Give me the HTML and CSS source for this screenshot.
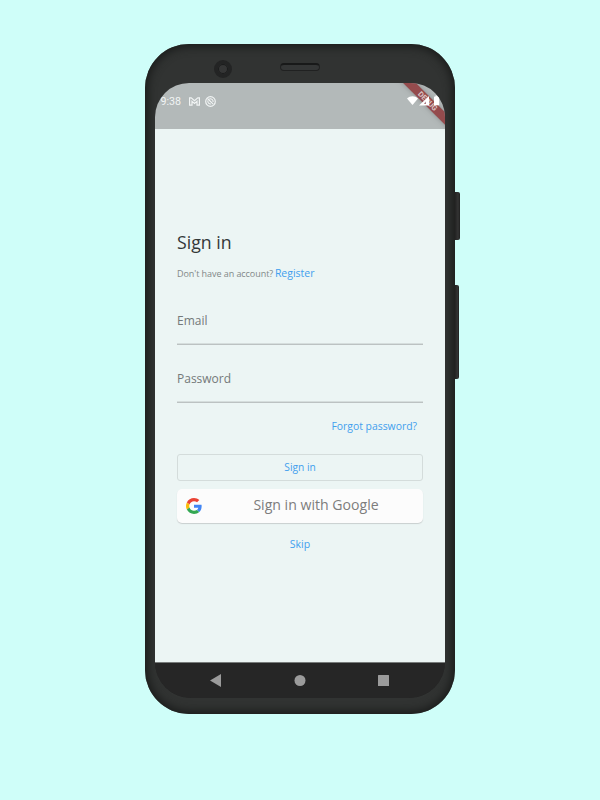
FILE: index.html
```
<!DOCTYPE html>
<html lang="en">
<head>
<meta charset="utf-8">
<title>Sign in</title>
<link rel="stylesheet" href="styles.css">
</head>
<body>
<main class="phone">
  <span class="side-key power"></span>
  <span class="side-key volume"></span>
  <span class="camera"></span>
  <span class="speaker"></span>
  <div class="screen">
    <header class="status">
      <span class="time">9:38</span>
      <svg class="mail" width="11" height="9" viewBox="0 0 11 9" fill="none" stroke="#f1f4f4" stroke-width="1.2"><path d="M.6 8.2V.8h1.6l3.3 2.8L8.8.8h1.6v7.4H8V4.300L5.500 6.400 3 4.300v3.900z"/></svg>
      <svg class="sync" width="11" height="11" viewBox="0 0 11 11" fill="none" stroke="#f1f4f4"><circle cx="5.5" cy="5.5" r="4.800" stroke-width="1.2"/><path d="M2.500 2.500l5.700 5.700M4.300 3c2-.8 4.200.8 3.800 3M2.900 4.500c-.5 2 1.200 3.900 3.200 3.500" stroke-width="1.100"/></svg>
      <svg class="signals" width="35" height="12" viewBox="0 0 35 12" fill="#fff"><path d="M0 3.600C3.300.6 7.800.6 11 3.600L5.500 10z"/><path fill-rule="evenodd" d="M12 10.500L22 1v9.500zM17 8.700h2V6.200z"/><path d="M27 10.300V2.200q0-.7.700-.7h.8V.6h2.200v.9h.8q.7 0 .7.700v8.100z"/></svg>
      <span class="debug">DEBUG</span>
    </header>
    <section class="content">
      <h1>Sign in</h1>
      <p class="account">Don't have an account? <a>Register</a></p>
      <div class="field">Email</div>
      <div class="field password">Password</div>
      <a class="forgot">Forgot password?</a>
      <div class="button">Sign in</div>
      <div class="google">
        <svg width="16" height="16" viewBox="0 0 48 48"><path fill="#ea4335" d="M24 9.500c3.540 0 6.710 1.220 9.210 3.600l6.850-6.850C35.900 2.380 30.470 0 24 0 14.620 0 6.510 5.380 2.560 13.220l7.980 6.190C12.430 13.720 17.740 9.500 24 9.500z"/><path fill="#4285f4" d="M46.980 24.550c0-1.570-.15-3.090-.38-4.550H24v9.020h12.940c-.58 2.960-2.260 5.480-4.780 7.180l7.730 6c4.510-4.180 7.090-10.360 7.090-17.650z"/><path fill="#fbbc05" d="M10.530 28.590c-.48-1.450-.76-2.990-.76-4.590s.27-3.140.76-4.590l-7.980-6.190C.92 16.460 0 20.120 0 24s.92 7.540 2.560 10.780z"/><path fill="#34a853" d="M24 48c6.480 0 11.930-2.130 15.890-5.810l-7.730-6c-2.150 1.450-4.920 2.300-8.160 2.300-6.260 0-11.570-4.220-13.470-9.910l-7.980 6.190C6.510 42.620 14.620 48 24 48z"/></svg>
        <span>Sign in with Google</span>
      </div>
      <a class="skip">Skip</a>
    </section>
    <nav class="nav">
      <svg width="290" height="35" viewBox="0 0 290 35" fill="#9b9b9b"><path d="M55 17.500L66 11v13z"/><circle cx="145" cy="17.500" r="5.500"/><rect x="223" y="12" width="11" height="11" rx=".5"/></svg>
    </nav>
  </div>
</main>
</body>
</html>
```
FILE: styles.css
```
* { box-sizing: border-box; }
body {
  margin: 0;
  height: 800px;
  padding-top: 44px;
  background: #cffef9;
  font-family: "Open Sans", sans-serif;
}
.phone {
  position: relative;
  width: 310px;
  height: 670px;
  margin: 0 auto;
  padding: 39px 10px 16px;
  border-radius: 44px;
  background: #313332;
  box-shadow: inset 0 0 9px 3px #1b1d1c;
}
.side-key {
  position: absolute;
  left: 310px;
  border-radius: 0 2px 2px 0;
  background: linear-gradient(90deg, #222, #343434 60%, #202020);
}
.power { top: 148px; width: 5px; height: 48px; }
.volume { top: 241px; width: 4px; height: 94px; }
.camera {
  position: absolute;
  left: 69px;
  top: 16px;
  width: 18px;
  height: 18px;
  border: 4px solid #232424;
  border-radius: 50%;
  background: #353636;
  box-shadow: inset 0 0 0 1px #1b1c1c;
}
.speaker {
  position: absolute;
  left: 135px;
  top: 19px;
  width: 40px;
  height: 8px;
  border: 1px solid #202121;
  border-top: 2px solid #181919;
  border-radius: 4px;
  background: #343636;
}
.screen {
  display: flex;
  flex-direction: column;
  height: 615px;
  overflow: hidden;
  border-radius: 34px 34px 36px 36px;
  background: #262626;
}
.status {
  position: relative;
  display: flex;
  align-items: flex-start;
  flex: 0 0 46px;
  padding: 11px 3px 0 5.500px;
  background: #b3b9b9;
}
.time {
  width: 28.500px;
  font: 10.700px/15px Roboto, sans-serif;
  color: #f1f4f4;
}
.mail { margin-top: 3px; }
.sync { margin: 2px 0 0 5px; }
.signals { position: relative; z-index: 1; margin: 1px 0 0 auto; }
.debug {
  position: absolute;
  right: -22px;
  top: 13px;
  width: 80px;
  height: 9px;
  transform: rotate(45deg);
  background: #8f3a3cdd;
  box-shadow: 0 0 5px #6668;
  color: #dcc6c6;
  font: bold 7.500px/9px Roboto, sans-serif;
  text-align: center;
  text-indent: 2px;
}
.content {
  display: flex;
  flex-direction: column;
  flex: 0 0 533px;
  padding: 100px 22px 0;
  background: #ecf5f4;
}
h1 {
  margin: 0;
  font-size: 17.700px;
  font-weight: 400;
  line-height: 26px;
  color: #333838;
}
.account {
  margin: 9px 0 0;
  font-size: 9px;
  letter-spacing: -.06px;
  line-height: 18px;
  white-space: nowrap;
  color: #828888;
}
a { color: #429fee; font-size: 10.500px; letter-spacing: 0; }
.account a { margin-left: -.5px; font-size: 10.500px; }
.field {
  height: 33px;
  margin-top: 29px;
  border-bottom: 1px solid #bcc2c2;
  box-shadow: inset 0 -1px #d6dedd;
  font-size: 12px;
  line-height: 18px;
  color: #747979;
}
.password { margin-top: 25px; }
.forgot {
  align-self: flex-end;
  margin: 14px 6px 0 0;
  font-size: 10.400px;
  line-height: 18px;
}
.button {
  height: 27px;
  margin-top: 19px;
  border: 1px solid #d4dcdb;
  border-radius: 3px;
  text-align: center;
  font-size: 10.200px;
  line-height: 25px;
  color: #429fee;
}
.google {
  display: flex;
  align-items: center;
  height: 34px;
  margin-top: 8px;
  padding-left: 9px;
  border-radius: 5px;
  background: #fcfcfc;
  box-shadow: 0 1px 1px #c9cfcf;
  color: #7d7d7d;
  font-size: 14.100px;
}
.google span { flex: 1; padding: 0 0 3px 7px; text-align: center; }
.skip { margin-top: 12px; text-align: center; line-height: 18px; }
.nav {
  height: 36px;
  border-top: 1px solid #777b7a;
  background: #262626;
}
.nav svg { display: block; }
```
